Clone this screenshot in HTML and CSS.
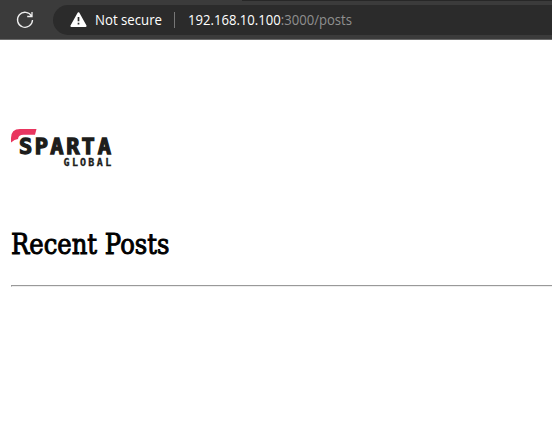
FILE: index.html
```
<!DOCTYPE html>
<html lang="en">
<head>
<meta charset="utf-8">
<title>Recent Posts</title>
<link rel="stylesheet" href="styles.css">
</head>
<body>
<header class="toolbar">
  <svg class="reload" width="18" height="18" viewBox="0 0 18 18"><path d="M15.6 5.2A7.5 7.5 0 1 0 16.5 9M16 1v4.5h-4.8"/></svg>
  <div class="address">
    <svg class="warning" width="17" height="16" viewBox="0 0 17 16"><path class="triangle" d="M8.5 1.2 15.6 14H1.4Z"/><path class="mark" d="M8.5 5v4.3M8.5 10.8v1.7"/></svg>
    <svg class="label" width="68" height="22"><text x="0" y="16" textLength="67" lengthAdjust="spacingAndGlyphs">Not secure</text></svg>
    <span class="divider"></span>
    <svg class="url" width="166" height="22"><text x="0" y="16" textLength="164" lengthAdjust="spacingAndGlyphs">192.168.10.100<tspan class="path">:3000/posts</tspan></text></svg>
  </div>
</header>
<main class="page">
  <svg class="logo" width="101" height="39" viewBox="0 0 101 39" role="img">
    <path class="swoosh" d="M0 14.5V10Q0 1 9 1H25.5L24 6.8H12.5Q7.5 6.8 7 11Q3.500 11 0 14.500Z"/>
    <text class="sparta" y="26.4" x="7.900 23.700 39.200 55.200 70.500 86.800">SPARTA</text>
    <text class="global" y="37.6" x="52.500 61 69 77.300 85.800 94.300">GLOBAL</text>
  </svg>
  <h1><svg class="title" width="162" height="36"><text x="0" y="25.500" textLength="158.500" lengthAdjust="spacingAndGlyphs">Recent Posts</text></svg></h1>
  <hr>
</main>
</body>
</html>
```
FILE: styles.css
```
* { box-sizing: border-box; }
body { margin: 0; background: #fff; overflow: hidden; }
svg { display: block; flex: none; overflow: visible; }
.toolbar {
  height: 40px;
  padding: 5px 0 4px 16px;
  display: flex;
  align-items: center;
  background: linear-gradient(#272727, #272727) 242px 0 / 310px 1px no-repeat, #3b3b3b;
  border-bottom: 1px solid #6b6b6b;
}
.reload { fill: none; stroke: #eee; stroke-width: 1.3; }
.address {
  flex: 1;
  height: 30px;
  margin-left: 19px;
  padding-left: 17px;
  display: flex;
  align-items: center;
  background: #2b2b2b;
  border-radius: 15px 0 0 15px;
  font-family: "Open Sans", "Noto Sans", sans-serif;
  font-size: 14px;
}
.triangle { fill: #fff; stroke: #fff; stroke-width: 2; stroke-linejoin: round; }
.mark { stroke: #2b2b2b; stroke-width: 1.7; }
.label { margin-left: 8px; fill: #fff; }
.divider { width: 1px; height: 16px; margin-left: 11px; background: #777; }
.url { margin-left: 13px; fill: #fff; }
.path { fill: #8f8f8f; }
.page { padding: 88px 0 0 11px; }
.swoosh { fill: #e9355f; }
.sparta, .global {
  font-family: "DejaVu Sans Mono", monospace;
  font-weight: 700;
  fill: #1d1d1b;
  stroke: #1d1d1b;
}
.sparta { font-size: 22px; stroke-width: 1.3; }
.global { font-size: 10px; stroke-width: .3; }
h1 { margin: 61px 0 0; }
.title {
  font-family: "DejaVu Serif", serif;
  font-size: 28.5px;
  font-weight: 400;
  fill: #000;
  stroke: #000;
  stroke-width: 1;
}
hr { margin: 21px 0 0; border: 0; height: 2px; border-top: 1px solid #999; border-bottom: 1px solid #eee; border-left: 1px solid #999; }
```
